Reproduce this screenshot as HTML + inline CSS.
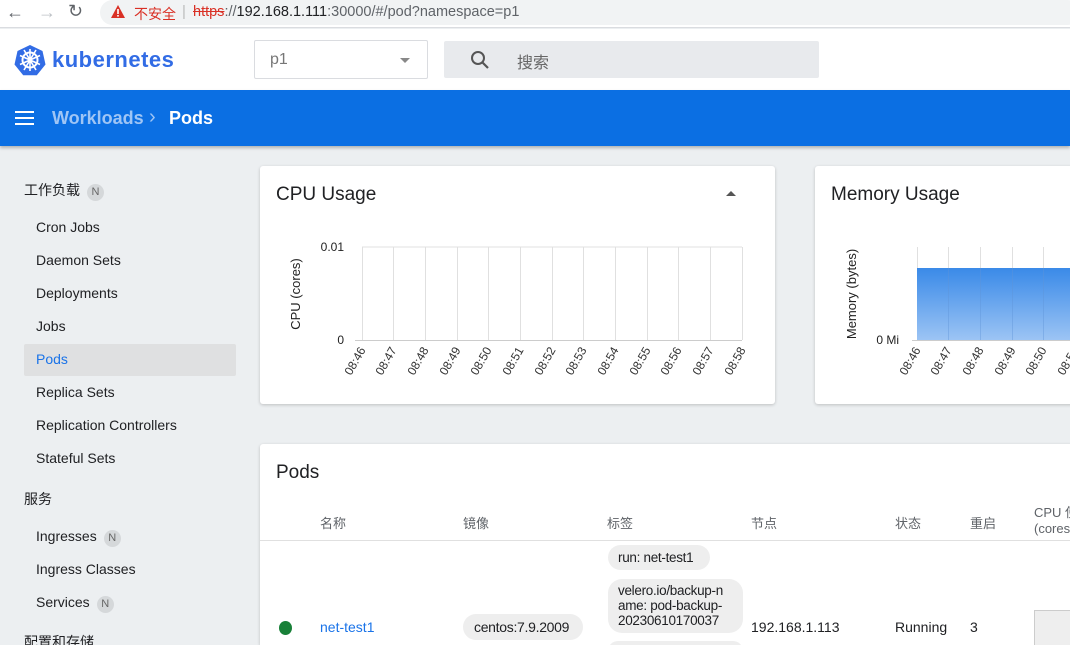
<!DOCTYPE html>
<html><head><meta charset="utf-8"><style>
*{margin:0;padding:0;box-sizing:border-box}
html,body{width:1070px;height:645px;overflow:hidden}
body{background:#eceff1;font-family:"Liberation Sans","Noto Sans CJK SC",sans-serif;position:relative;color:#202124}
.a{position:absolute;white-space:nowrap}
#bb{left:0;top:0;width:1070px;height:28px;background:#fff;border-bottom:1px solid #dadce0}
#url{left:100px;top:0;width:980px;height:25px;background:#f1f3f4;border-radius:13px}
#hdr{left:0;top:29px;width:1070px;height:61px;background:#fff}
#blue{left:0;top:90px;width:1070px;height:56px;background:#0b6fe3;box-shadow:0 2px 3px rgba(0,0,0,.25)}
.card{background:#fff;border-radius:3px;box-shadow:0 1px 3px rgba(0,0,0,.2)}
.nav{left:36px;font-size:14px;color:#202124}
.sec{left:24px;font-size:14px}
.badge{display:inline-block;width:17px;height:17px;border-radius:50%;background:#d5d8da;color:#666;font-size:11px;text-align:center;line-height:17px;margin-left:7px;vertical-align:0}
.th{top:513px;font-size:13px;color:#5f6368}
.chip{background:#eeeeee;border-radius:14px;font-size:13.5px;color:#202124;letter-spacing:-.3px}
</style></head><body>
<div id="bb" class="a"></div>
<div id="url" class="a"></div>
<div class="a" style="left:6px;top:2px;font-size:18px;color:#5f6368">&#8592;</div>
<div class="a" style="left:38px;top:2px;font-size:18px;color:#bdc1c6">&#8594;</div>
<div class="a" style="left:68px;top:1px;font-size:18px;color:#5f6368">&#8635;</div>
<svg class="a" style="left:110px;top:4px" width="16" height="15"><path d="M8 1L15 14H1Z" fill="#d93025"/><rect x="7.2" y="5" width="1.6" height="5" fill="#fff"/><rect x="7.2" y="11" width="1.6" height="1.6" fill="#fff"/></svg>
<div class="a" style="left:134px;top:4px;font-size:14px;color:#d93025">不安全</div>
<div class="a" style="left:182px;top:3px;font-size:15px;color:#bbb">|</div>
<div class="a" style="left:193px;top:4px;font-size:14.5px;color:#5f6368"><span style="color:#d93025;text-decoration:line-through">https</span>://<span style="color:#202124">192.168.1.111</span>:30000/#/pod?namespace=p1</div>
<div id="hdr" class="a"></div>
<svg class="a" style="left:14px;top:44px" width="32" height="32" viewBox="0 0 32 32"><path d="M16 1L28.5 7 31.5 20.5 22.8 31.3H9.2L.5 20.5 3.5 7Z" fill="#326ce5"/><circle cx="16" cy="16" r="7.5" fill="none" stroke="#fff" stroke-width="2"/><circle cx="16" cy="16" r="2" fill="#fff"/><path d="M16 5v22M6 11.5l20 9M6 20.5l20-9M10 26l12-20M22 26L10 6" stroke="#fff" stroke-width="1.6"/></svg>
<div class="a" style="left:52px;top:47px;font-size:22px;font-weight:bold;color:#326ce5;letter-spacing:.5px">kubernetes</div>
<div class="a" style="left:254px;top:40px;width:174px;height:39px;border:1px solid #dadce0;border-radius:2px;background:#fff"></div>
<div class="a" style="left:270px;top:51px;font-size:16px;color:#777">p1</div>
<div class="a" style="left:400px;top:58px;width:0;height:0;border-left:5px solid transparent;border-right:5px solid transparent;border-top:5px solid #888"></div>
<div class="a" style="left:444px;top:41px;width:375px;height:37px;background:#e8eaed;border-radius:2px"></div>
<svg class="a" style="left:470px;top:50px" width="20" height="20"><circle cx="8" cy="8" r="6" fill="none" stroke="#555" stroke-width="2"/><path d="M12.5 12.5L18 18" stroke="#555" stroke-width="2.2"/></svg>
<div class="a" style="left:517px;top:49px;font-size:16px;color:#666">搜索</div>
<div id="blue" class="a"></div>
<div class="a" style="left:15px;top:111px;width:19px;height:2px;background:#fff;box-shadow:0 6px 0 #fff,0 12px 0 #fff"></div>
<div class="a" style="left:52px;top:108px;font-size:18px;color:#9fc5f5;font-weight:bold">Workloads</div>
<div class="a" style="left:149px;top:106px;font-size:20px;color:#9fc5f5">&#8250;</div>
<div class="a" style="left:169px;top:108px;font-size:18px;color:#fff;font-weight:bold">Pods</div>

<div class="a sec" style="top:180px">工作负载<span class="badge">N</span></div>
<div class="a nav" style="top:219px">Cron Jobs</div>
<div class="a nav" style="top:252px">Daemon Sets</div>
<div class="a nav" style="top:285px">Deployments</div>
<div class="a nav" style="top:318px">Jobs</div>
<div class="a" style="left:24px;top:344px;width:212px;height:32px;background:#dfe0e1;border-radius:2px"></div>
<div class="a nav" style="top:351px;color:#1a73e8">Pods</div>
<div class="a nav" style="top:384px">Replica Sets</div>
<div class="a nav" style="top:417px">Replication Controllers</div>
<div class="a nav" style="top:450px">Stateful Sets</div>
<div class="a sec" style="top:489px">服务</div>
<div class="a nav" style="top:528px">Ingresses<span class="badge">N</span></div>
<div class="a nav" style="top:561px">Ingress Classes</div>
<div class="a nav" style="top:594px">Services<span class="badge">N</span></div>
<div class="a sec" style="top:632px">配置和存储</div>

<div class="a card" style="left:260px;top:166px;width:515px;height:238px"></div>
<div class="a card" style="left:815px;top:166px;width:260px;height:238px"></div>
<div class="a card" style="left:260px;top:444px;width:815px;height:201px;border-radius:3px 3px 0 0"></div>
<div class="a" style="left:276px;top:184px;font-size:19px">CPU Usage</div>
<div class="a" style="left:726px;top:191px;width:0;height:0;border-left:5px solid transparent;border-right:5px solid transparent;border-bottom:5px solid #555"></div>
<div class="a" style="left:831px;top:184px;font-size:19px">Memory Usage</div>

<svg class="a" style="left:0;top:0" width="1070" height="645" font-family="Liberation Sans, sans-serif">
<g stroke="#e0e0e0" stroke-width="1">
<line x1="362" y1="247" x2="742" y2="247"/>
<line x1="362.5" y1="247" x2="362.5" y2="340"/><line x1="393.5" y1="247" x2="393.5" y2="340"/><line x1="425.5" y1="247" x2="425.5" y2="340"/><line x1="457.5" y1="247" x2="457.5" y2="340"/><line x1="488.5" y1="247" x2="488.5" y2="340"/><line x1="520.5" y1="247" x2="520.5" y2="340"/><line x1="552.5" y1="247" x2="552.5" y2="340"/><line x1="583.5" y1="247" x2="583.5" y2="340"/><line x1="615.5" y1="247" x2="615.5" y2="340"/><line x1="647.5" y1="247" x2="647.5" y2="340"/><line x1="678.5" y1="247" x2="678.5" y2="340"/><line x1="710.5" y1="247" x2="710.5" y2="340"/><line x1="742.5" y1="247" x2="742.5" y2="340"/>
<line x1="355" y1="340.5" x2="742" y2="340.5" stroke="#ccc"/>
</g>
<text x="344" y="251" font-size="12" text-anchor="end" fill="#222">0.01</text>
<text x="344" y="344" font-size="12" text-anchor="end" fill="#222">0</text>
<text transform="translate(300,294) rotate(-90)" font-size="13" text-anchor="middle" fill="#222">CPU (cores)</text>
<g font-size="12" fill="#333" text-anchor="end">
<text transform="translate(366,350) rotate(-60)">08:46</text><text transform="translate(397,350) rotate(-60)">08:47</text><text transform="translate(429,350) rotate(-60)">08:48</text><text transform="translate(461,350) rotate(-60)">08:49</text><text transform="translate(492,350) rotate(-60)">08:50</text><text transform="translate(524,350) rotate(-60)">08:51</text><text transform="translate(556,350) rotate(-60)">08:52</text><text transform="translate(587,350) rotate(-60)">08:53</text><text transform="translate(619,350) rotate(-60)">08:54</text><text transform="translate(651,350) rotate(-60)">08:55</text><text transform="translate(682,350) rotate(-60)">08:56</text><text transform="translate(714,350) rotate(-60)">08:57</text><text transform="translate(746,350) rotate(-60)">08:58</text>
</g>
<defs><linearGradient id="g" x1="0" y1="0" x2="0" y2="1"><stop offset="0" stop-color="#3a8ae8"/><stop offset="1" stop-color="#9cc4f4"/></linearGradient></defs>
<g stroke="#e0e0e0"><line x1="917.5" y1="247" x2="917.5" y2="340"/><line x1="948.5" y1="247" x2="948.5" y2="340"/><line x1="980.5" y1="247" x2="980.5" y2="340"/><line x1="1012.5" y1="247" x2="1012.5" y2="340"/><line x1="1043.5" y1="247" x2="1043.5" y2="340"/></g>
<rect x="917" y="268" width="153" height="72" fill="url(#g)"/>
<g stroke="#5f93d6" stroke-opacity=".4"><line x1="948.5" y1="268" x2="948.5" y2="340"/><line x1="980.5" y1="268" x2="980.5" y2="340"/><line x1="1012.5" y1="268" x2="1012.5" y2="340"/><line x1="1043.5" y1="268" x2="1043.5" y2="340"/></g>
<line x1="912" y1="340.5" x2="1070" y2="340.5" stroke="#ccc"/>
<text x="899" y="344" font-size="12" text-anchor="end" fill="#222">0 Mi</text>
<text transform="translate(856,294) rotate(-90)" font-size="13" text-anchor="middle" fill="#222">Memory (bytes)</text>
<g font-size="12" fill="#333" text-anchor="end">
<text transform="translate(921,350) rotate(-60)">08:46</text><text transform="translate(952,350) rotate(-60)">08:47</text><text transform="translate(984,350) rotate(-60)">08:48</text><text transform="translate(1016,350) rotate(-60)">08:49</text><text transform="translate(1047,350) rotate(-60)">08:50</text><text transform="translate(1079,350) rotate(-60)">08:51</text>
</g>
</svg>

<div class="a" style="left:276px;top:462px;font-size:19px">Pods</div>
<div class="a th" style="left:320px">名称</div>
<div class="a th" style="left:463px">镜像</div>
<div class="a th" style="left:607px">标签</div>
<div class="a th" style="left:751px">节点</div>
<div class="a th" style="left:895px">状态</div>
<div class="a th" style="left:970px">重启</div>
<div class="a th" style="left:1034px;top:505px;line-height:16px">CPU 使<br>(cores</div>
<div class="a" style="left:260px;top:540px;width:810px;height:1px;background:#e0e0e0"></div>
<div class="a chip" style="left:608px;top:545px;width:102px;height:25px;padding:5px 10px">run: net-test1</div>
<div class="a chip" style="left:608px;top:579px;width:135px;height:54px;padding:4px 10px;line-height:15px">velero.io/backup-n<br>ame: pod-backup-<br>20230610170037</div>
<div class="a chip" style="left:608px;top:641px;width:135px;height:20px"></div>
<div class="a" style="left:279px;top:621px;width:13px;height:14px;border-radius:50%;background:#188038"></div>
<div class="a" style="left:320px;top:619px;font-size:14px;color:#1a73e8">net-test1</div>
<div class="a chip" style="left:463px;top:614px;width:120px;height:26px;padding:5px 11px;font-size:14px">centos:7.9.2009</div>
<div class="a" style="left:751px;top:619px;font-size:14px">192.168.1.113</div>
<div class="a" style="left:895px;top:619px;font-size:14px">Running</div>
<div class="a" style="left:970px;top:619px;font-size:14px">3</div>
<div class="a" style="left:1034px;top:610px;width:40px;height:36px;background:#eeeeee;border:1px solid #ccc"></div>
</body></html>
